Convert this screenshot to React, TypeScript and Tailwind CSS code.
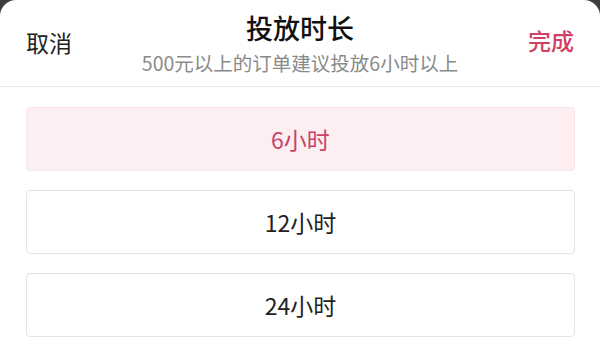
import React from "react";

const font = { fontFamily: '"Noto Sans CJK SC", "Noto Sans", sans-serif' };

export default function App() {
  const options = [
    { label: "6小时", active: true },
    { label: "12小时", active: false },
    { label: "24小时", active: false },
  ];
  return (
    <div className="w-[600px] h-[352px] bg-[#3c3c3c] overflow-hidden" style={font}>
      <div className="w-full h-full bg-white rounded-t-[16px] flex flex-col">
        <div className="h-[87px] flex items-center justify-between px-[26px] border-b border-[#e6e6e6] shrink-0">
          <div className="text-[23px] text-[#222] w-[80px] mt-[-2px]">取消</div>
          <div className="flex flex-col items-center">
            <div className="text-[27px] leading-[30px] font-medium text-[#111] mt-[2px]">投放时长</div>
            <div className="text-[19.5px] leading-[24px] text-[#8a8a8a] mt-[8px]">500元以上的订单建议投放6小时以上</div>
          </div>
          <div className="text-[23px] font-medium text-[#d23f66] w-[80px] text-right mt-[-5px]">完成</div>
        </div>
        <div className="flex flex-col gap-[19px] px-[26px] pt-[20px] pr-[25px]">
          {options.map((o) =>
            o.active ? (
              <div
                key={o.label}
                className="h-[64px] rounded-[4px] bg-[#fdeef1] border border-[#fae4e8] flex items-center justify-center text-[23px] text-[#c8416a]"
              >
                {o.label}
              </div>
            ) : (
              <div
                key={o.label}
                className="h-[64px] rounded-[4px] bg-white border border-[#e4e4e4] flex items-center justify-center text-[23px] text-[#222]"
              >
                {o.label}
              </div>
            )
          )}
        </div>
      </div>
    </div>
  );
}
